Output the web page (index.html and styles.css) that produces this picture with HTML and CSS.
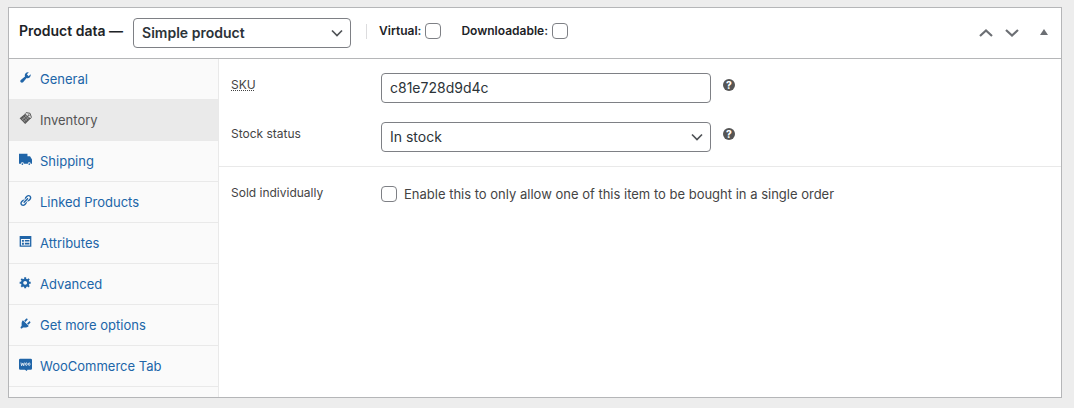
FILE: index.html
```html
<!DOCTYPE html>
<html lang="en">
<head>
    <meta charset="UTF-8">
    <meta name="viewport" content="width=device-width, initial-scale=1.0">
    <title>Product data</title>
    <link rel="stylesheet" href="styles.css">
</head>
<body>
    <div class="postbox">
        <div class="postbox-header">
            <h2>Product data —</h2>
            <select class="product-type" aria-label="Product type">
                <option>Simple product</option>
                <option>Grouped product</option>
                <option>External/Affiliate product</option>
                <option>Variable product</option>
            </select>
            <div class="type-options">
                <label>Virtual: <input type="checkbox"></label>
                <label>Downloadable: <input type="checkbox"></label>
            </div>
            <div class="handle-actions">
                <button type="button" aria-label="Move up">
                    <svg width="14" height="10" viewBox="0 0 14 10"><path d="M1 8l6-5.5L13 8" fill="none" stroke="currentColor" stroke-width="2.2"/></svg>
                </button>
                <button type="button" aria-label="Move down">
                    <svg width="14" height="10" viewBox="0 0 14 10"><path d="M1 2l6 5.5L13 2" fill="none" stroke="currentColor" stroke-width="2.2"/></svg>
                </button>
                <button type="button" class="toggle" aria-label="Toggle panel">
                    <svg width="8" height="8" viewBox="0 0 8 8"><path d="M4 0l4 6H0z" fill="currentColor"/></svg>
                </button>
            </div>
        </div>

        <div class="panel-wrap">
            <ul class="tabs">
                <li><a href="#general">
                    <svg viewBox="0 0 20 20"><path d="M16.68 9.77c-1.34 1.34-3.3 1.67-4.95.99l-5.41 6.52c-.99.99-2.59.99-3.58 0s-.99-2.59 0-3.57l6.52-5.42c-.68-1.65-.35-3.61.99-4.95 1.28-1.28 3.12-1.62 4.72-1.06l-2.89 2.89 2.82 2.82 2.86-2.87c.53 1.58.18 3.39-1.08 4.65z"/></svg>
                    <span>General</span></a></li>
                <li class="active"><a href="#inventory">
                    <svg viewBox="0 0 20 20">
                        <path class="tag" d="M1 9.500L9.500 2.500l8.500 7.500L9.500 18.500z"/>
                        <path class="cut" d="M4 9.500l6 6M6.500 7.500l6 6M9 5l6 6M4.500 12L12 5.500M7.500 14.500L15 8"/>
                        <path class="line" d="M9.500 2.500l1.500-1.500 6 1L19 8l-1.500 2.500"/>
                        <circle class="hole" cx="15" cy="5" r="1.600"/>
                    </svg>
                    <span>Inventory</span></a></li>
                <li><a href="#shipping">
                    <svg viewBox="0 0 20 20"><path d="M0 1h13v4h4l3 5v6.500h-2a2.200 2.200 0 0 0-4.400 0H7.400a2.200 2.200 0 0 0-4.400 0H0z"/><circle cx="5.200" cy="17" r="1.300"/><circle cx="15.800" cy="17" r="1.300"/></svg>
                    <span>Shipping</span></a></li>
                <li><a href="#linked">
                    <svg viewBox="0 0 20 20"><path d="M17.74 2.76c1.68 1.69 1.68 4.41 0 6.1l-1.53 1.52c-1.12 1.12-2.7 1.47-4.14 1.09l2.62-2.61.76-.77.76-.76c.84-.84.84-2.2 0-3.04-.84-.85-2.2-.85-3.04 0l-.77.76-3.38 3.38c-.37-1.44-.02-3.02 1.1-4.14l1.52-1.53c1.69-1.68 4.42-1.68 6.1 0zM8.59 13.43l5.34-5.34c.42-.42.42-1.1 0-1.52-.44-.43-1.13-.39-1.53 0l-5.33 5.34c-.42.42-.42 1.1 0 1.52.44.43 1.13.39 1.52 0zm-.76 2.29l4.14-4.15c.38 1.44.03 3.02-1.09 4.14l-1.52 1.53c-1.69 1.68-4.41 1.68-6.1 0-1.68-1.68-1.68-4.42 0-6.1l1.53-1.52c1.12-1.12 2.7-1.47 4.14-1.1l-4.14 4.15c-.85.84-.85 2.2 0 3.05.84.84 2.2.84 3.04 0z"/></svg>
                    <span>Linked Products</span></a></li>
                <li><a href="#attributes">
                    <svg viewBox="0 0 20 20"><path fill-rule="evenodd" d="M1 1.500h18v16.500H1zM3 6v10h14V6z"/><path d="M4.500 7.500h3v3h-3zM4.500 12h3v3h-3zM9 7.500h7v2.500H9zM9 12h7v2.500H9z"/></svg>
                    <span>Attributes</span></a></li>
                <li><a href="#advanced">
                    <svg viewBox="0 0 20 20"><path d="M18 12h-2.180c-.17.7-.44 1.350-.81 1.930l1.540 1.540-2.100 2.100-1.540-1.540c-.58.36-1.230.63-1.910.79V19H8v-2.180c-.68-.16-1.330-.43-1.910-.79l-1.540 1.540-2.120-2.120 1.540-1.540c-.36-.58-.63-1.230-.79-1.910H1V9.030h2.170c.16-.7.44-1.350.8-1.940L2.430 5.550l2.100-2.100 1.540 1.540c.58-.37 1.240-.64 1.930-.81V2h3v2.180c.68.16 1.330.43 1.910.79l1.540-1.540 2.120 2.120-1.540 1.540c.36.59.64 1.240.8 1.940H18V12zm-8.500 1.500c1.660 0 3-1.340 3-3s-1.340-3-3-3-3 1.340-3 3 1.340 3 3 3z"/></svg>
                    <span>Advanced</span></a></li>
                <li><a href="#more">
                    <svg viewBox="0 0 20 20"><path d="M13.110 4.360L9.870 7.600 8 5.730l3.240-3.240c.35-.34 1.050-.2 1.560.32.52.51.66 1.210.31 1.550zm-8 1.770l.91-1.120 9.010 9.010-1.190.84c-.71.71-2.630 1.160-3.820 1.160H6.140L4.900 17.260c-.59.59-1.540.59-2.120 0-.59-.58-.59-1.530 0-2.120l1.240-1.240v-3.880c0-1.130.4-3.190 1.090-3.890zm7.260 3.970l3.240-3.240c.34-.35 1.040-.21 1.550.31.52.51.66 1.210.31 1.550l-3.240 3.250z"/></svg>
                    <span>Get more options</span></a></li>
                <li><a href="#woocommerce">
                    <svg viewBox="0 0 20 20">
                        <path d="M2 1h16a2 2 0 0 1 2 2v13a2 2 0 0 1-2 2h-5l-1 2-3-2H2a2 2 0 0 1-2-2V3a2 2 0 0 1 2-2z"/>
                        <path class="woo" d="M3 7l1 5 1.800-4 1.500 4 1-5"/>
                        <ellipse class="woo" cx="11.300" cy="9.500" rx="1.300" ry="2"/>
                        <ellipse class="woo" cx="15.700" cy="9.500" rx="1.300" ry="2"/>
                    </svg>
                    <span>WooCommerce Tab</span></a></li>
            </ul>

            <div class="panel">
                <div class="options-group">
                    <div class="form-field">
                        <label for="sku"><abbr title="Stock Keeping Unit">SKU</abbr></label>
                        <div class="control">
                            <input type="text" id="sku" value="c81e728d9d4c">
                            <span class="help-tip">?</span>
                        </div>
                    </div>
                    <div class="form-field">
                        <label for="stock-status">Stock status</label>
                        <div class="control">
                            <select id="stock-status">
                                <option>In stock</option>
                                <option>Out of stock</option>
                                <option>On backorder</option>
                            </select>
                            <span class="help-tip">?</span>
                        </div>
                    </div>
                </div>
                <div class="options-group">
                    <div class="form-field">
                        <label for="sold-individually">Sold individually</label>
                        <div class="control check">
                            <input type="checkbox" id="sold-individually">
                            <label class="description" for="sold-individually">Enable this to only allow one of this item to be bought in a single order</label>
                        </div>
                    </div>
                </div>
            </div>
        </div>
    </div>
</body>
</html>
```
FILE: styles.css
```css
* {
    box-sizing: border-box;
}
body {
    margin: 0;
    padding: 7px 12px 10px 8px;
    background: #ededed;
    color: #1d2327;
    font-family: Inter, "Liberation Sans", sans-serif;
    font-size: 13px;
}
.postbox {
    background: #fff;
    border: 1px solid #b5b6b8;
}
.postbox-header {
    display: flex;
    align-items: flex-start;
    padding: 10px;
    border-bottom: 1px solid #b5b6b8;
    line-height: 26px;
}
h2 {
    margin: 0 10px 0 0;
    font-size: 14px;
    font-weight: 600;
    line-height: 26px;
}

/* form controls */
select,
input[type="text"] {
    height: 30px;
    padding: 0 8px 2px;
    border: 1px solid #7e8085;
    border-radius: 4px;
    background-color: #fff;
    color: #2c3338;
    font-family: inherit;
    font-size: 14px;
}
select {
    appearance: none;
    padding-right: 24px;
    background-image: url("data:image/svg+xml,%3Csvg xmlns='http://www.w3.org/2000/svg' width='12' height='8' viewBox='0 0 12 8'%3E%3Cpath d='M1 1.5l5 5 5-5' fill='none' stroke='%23505357' stroke-width='1.7'/%3E%3C/svg%3E");
    background-repeat: no-repeat;
    background-position: right 7px center;
}
input[type="checkbox"] {
    appearance: none;
    flex: none;
    width: 16px;
    height: 16px;
    margin: 0;
    border: 1px solid #7e8085;
    border-radius: 4px;
    background: #fff;
}
input[type="checkbox"]:checked {
    background: #2271b1;
}

/* header */
.product-type {
    width: 218px;
    font-weight: 600;
}
.type-options {
    display: flex;
    align-items: center;
    gap: 20px;
    height: 26px;
    margin-left: 15px;
    font-size: 12px;
    font-weight: 600;
}
.type-options::before {
    content: "";
    width: 1px;
    height: 15px;
    margin-right: -8px;
    background: #dcdcde;
}
.type-options label {
    display: flex;
    align-items: center;
    gap: 4px;
}
.handle-actions {
    display: flex;
    align-items: center;
    gap: 12px;
    height: 30px;
    margin-left: auto;
    padding-right: 3px;
}
.handle-actions button {
    display: flex;
    padding: 0;
    border: 0;
    background: none;
    color: #6c6f74;
    cursor: pointer;
}
.handle-actions .toggle {
    margin-left: 9px;
}

/* tabs */
.panel-wrap {
    display: flex;
}
.tabs {
    flex: none;
    width: 210px;
    margin: 0;
    padding: 0 0 10px;
    border-right: 1px solid #e9e9e9;
    background: #fafafa;
    list-style: none;
}
.tabs a {
    display: flex;
    align-items: center;
    gap: 8px;
    padding: 10px;
    border-bottom: 1px solid #e9e9e9;
    color: #2065a8;
    line-height: 20px;
    text-decoration: none;
}
.tabs svg {
    width: 13px;
    height: 13px;
    margin-bottom: 4px;
    fill: currentColor;
}
.tabs .active a {
    background: #eaeaea;
    color: #555;
}
.cut,
.line,
.woo {
    fill: none;
    stroke: currentColor;
}
.line {
    stroke-width: 1.5;
}
.cut {
    stroke: #aaa;
}
.hole {
    fill: #777;
}
.woo {
    stroke: #fff;
    stroke-width: 1.2;
}

/* fields */
.panel {
    flex: 1;
    min-width: 0;
    color: #444;
}
.options-group {
    padding: 9px 0;
    border-bottom: 1px solid #e9e9e9;
}
.options-group:last-child {
    border-bottom: 0;
}
.form-field {
    display: flex;
    padding: 5px 20px 5px 12px;
    font-size: 12px;
    line-height: 24px;
}
.form-field + .form-field {
    margin-top: 9px;
}
.form-field > label {
    flex: none;
    width: 150px;
}
abbr {
    text-decoration: underline dotted;
}
.control {
    display: flex;
    flex: 1;
    gap: 12px;
}
.control select,
.control input[type="text"] {
    width: 50%;
}
.check {
    align-items: center;
    gap: 7px;
    min-height: 26px;
}
.description {
    font-size: 13px;
}
.help-tip {
    width: 12px;
    height: 12px;
    margin-top: 6px;
    border-radius: 50%;
    background: #555;
    color: #fff;
    font-size: 10px;
    font-weight: 800;
    line-height: 12px;
    text-align: center;
    cursor: help;
}
```
